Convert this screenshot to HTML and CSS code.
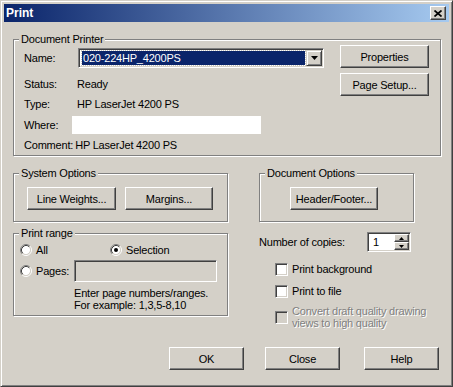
FILE: index.html
```html
<!DOCTYPE html>
<html>
<head>
<meta charset="UTF-8">
<title>Print</title>
<link rel="stylesheet" href="styles.css">
</head>
<body>
<div class="window">
    <div class="titlebar">
        <span class="title">Print</span>
        <span class="close-btn">
            <svg width="8" height="7" viewBox="0 0 8 7"><path d="M0.5 0.5 L7.5 6.5 M7.5 0.5 L0.5 6.5" stroke="#000" stroke-width="1.7" fill="none"/></svg>
        </span>
    </div>

    <div class="dialog">
        <fieldset class="group printer-group">
            <legend>Document Printer</legend>
            <div class="printer-body">
                <div class="printer-info">
                    <div class="row row-name">
                        <span class="lbl">Name:</span>
                        <div class="combo">
                            <div class="combo-value">020-224HP_4200PS</div>
                            <div class="drop">
                                <svg width="7" height="4" viewBox="0 0 7 4"><polygon points="0,0 7,0 3.5,4" fill="#000"/></svg>
                            </div>
                        </div>
                    </div>
                    <div class="row row-status">
                        <span class="lbl">Status:</span>
                        <span class="val">Ready</span>
                    </div>
                    <div class="row">
                        <span class="lbl">Type:</span>
                        <span class="val">HP LaserJet 4200 PS</span>
                    </div>
                    <div class="row row-where">
                        <span class="lbl">Where:</span>
                        <div class="where-field"></div>
                    </div>
                    <div class="row row-comment">
                        <span class="lbl">Comment:</span>
                        <span class="val">HP LaserJet 4200 PS</span>
                    </div>
                </div>
                <div class="printer-buttons">
                    <button class="btn btn-wide">Properties</button>
                    <button class="btn btn-wide">Page Setup...</button>
                </div>
            </div>
        </fieldset>

        <div class="options-row">
            <fieldset class="group system-group">
                <legend>System Options</legend>
                <div class="system-body">
                    <button class="btn btn-wide">Line Weights...</button>
                    <button class="btn btn-mid">Margins...</button>
                </div>
            </fieldset>
            <fieldset class="group docopt-group">
                <legend>Document Options</legend>
                <div class="docopt-body">
                    <button class="btn btn-mid">Header/Footer...</button>
                </div>
            </fieldset>
        </div>

        <div class="lower">
            <fieldset class="group range-group">
                <legend>Print range</legend>
                <div class="range-body">
                    <div class="radio-row">
                        <span class="radio radio-all">
                            <svg class="radio-mark" width="12" height="12" viewBox="0 0 12 12">
                                <circle cx="6" cy="6" r="4.2" fill="#fff"/>
                                <path d="M2.11 9.89 A5.5 5.5 0 0 1 9.89 2.11" stroke="#808080" fill="none"/>
                                <path d="M9.89 2.11 A5.5 5.5 0 0 1 2.11 9.89" stroke="#fff" fill="none"/>
                                <path d="M2.82 9.18 A4.5 4.5 0 0 1 9.18 2.82" stroke="#404040" fill="none"/>
                                <path d="M9.18 2.82 A4.5 4.5 0 0 1 2.82 9.18" stroke="#d4d0c8" fill="none"/>
                            </svg>
                            All
                        </span>
                        <span class="radio">
                            <svg class="radio-mark" width="12" height="12" viewBox="0 0 12 12">
                                <circle cx="6" cy="6" r="4.2" fill="#fff"/>
                                <path d="M2.11 9.89 A5.5 5.5 0 0 1 9.89 2.11" stroke="#808080" fill="none"/>
                                <path d="M9.89 2.11 A5.5 5.5 0 0 1 2.11 9.89" stroke="#fff" fill="none"/>
                                <path d="M2.82 9.18 A4.5 4.5 0 0 1 9.18 2.82" stroke="#404040" fill="none"/>
                                <path d="M9.18 2.82 A4.5 4.5 0 0 1 2.82 9.18" stroke="#d4d0c8" fill="none"/>
                                <circle cx="6" cy="6" r="2" fill="#000"/>
                            </svg>
                            Selection
                        </span>
                    </div>
                    <div class="radio-row pages-row">
                        <span class="radio radio-pages">
                            <svg class="radio-mark" width="12" height="12" viewBox="0 0 12 12">
                                <circle cx="6" cy="6" r="4.2" fill="#fff"/>
                                <path d="M2.11 9.89 A5.5 5.5 0 0 1 9.89 2.11" stroke="#808080" fill="none"/>
                                <path d="M9.89 2.11 A5.5 5.5 0 0 1 2.11 9.89" stroke="#fff" fill="none"/>
                                <path d="M2.82 9.18 A4.5 4.5 0 0 1 9.18 2.82" stroke="#404040" fill="none"/>
                                <path d="M9.18 2.82 A4.5 4.5 0 0 1 2.82 9.18" stroke="#d4d0c8" fill="none"/>
                            </svg>
                            Pages:
                        </span>
                        <div class="pages-field"></div>
                    </div>
                    <div class="range-hint">
                        Enter page numbers/ranges.<br>
                        For example: 1,3,5-8,10
                    </div>
                </div>
            </fieldset>

            <div class="copies-panel">
                <div class="copies-row">
                    <span class="copies-label">Number of copies:</span>
                    <div class="spinner">
                        <span class="spin-value">1</span>
                        <div class="spin-buttons">
                            <span class="spin-btn">
                                <svg width="5" height="3" viewBox="0 0 5 3"><polygon points="2.5,0 5,3 0,3" fill="#000"/></svg>
                            </span>
                            <span class="spin-btn">
                                <svg width="5" height="3" viewBox="0 0 5 3"><polygon points="0,0 5,0 2.5,3" fill="#000"/></svg>
                            </span>
                        </div>
                    </div>
                </div>
                <div class="check-row check-first">
                    <span class="checkbox"></span>
                    <span>Print background</span>
                </div>
                <div class="check-row check-second">
                    <span class="checkbox"></span>
                    <span>Print to file</span>
                </div>
                <div class="check-row check-disabled">
                    <span class="checkbox"></span>
                    <span class="disabled-text">Convert draft quality drawing<br>views to high quality</span>
                </div>
            </div>
        </div>

        <div class="actions">
            <button class="btn btn-action btn-ok">OK</button>
            <button class="btn btn-action btn-close">Close</button>
            <button class="btn btn-action">Help</button>
        </div>
    </div>
</div>
</body>
</html>
```

FILE: styles.css
```css
body
{
    margin: 0;
    font-family: "Liberation Sans", Arial, sans-serif;
    font-size: 11px;
    letter-spacing: -0.2px;
    color: #000;
    background: #d4d0c8;
}

.window
{
    width: 453px;
    height: 387px;
    box-sizing: border-box;
    background: #d4d0c8;
    border: 1px solid;
    border-color: #d4d0c8 #404040 #404040 #d4d0c8;
    box-shadow: inset 1px 1px 0 #fff, inset -1px -1px 0 #808080;
    padding: 3px;
}

/* title bar */
.titlebar
{
    display: flex;
    align-items: center;
    height: 18px;
    padding-left: 2px;
    background: linear-gradient(to right, #0a246a, #a6caf0);
    color: #fff;
}

.title
{
    font-weight: bold;
    font-size: 12px;
    letter-spacing: 0;
}

.close-btn
{
    margin-left: auto;
    margin-right: 3px;
    width: 16px;
    height: 14px;
    box-sizing: border-box;
    display: flex;
    align-items: center;
    justify-content: center;
    background: #d4d0c8;
    border: 1px solid;
    border-color: #fff #404040 #404040 #fff;
    box-shadow: inset -1px -1px 0 #808080;
}

.dialog
{
    padding: 11px 8px 0 9px;
}

/* etched group boxes */
.group
{
    box-sizing: border-box;
    margin: 0;
    padding: 0;
    min-width: 0;
    border: 1px solid #808080;
    box-shadow: 1px 1px 0 #fff, inset 1px 1px 0 #fff;
}

.group legend
{
    margin-left: 5px;
    padding: 0 2px;
    line-height: 13px;
    background: #d4d0c8;
}

/* buttons */
.btn
{
    box-sizing: border-box;
    height: 23px;
    padding: 0;
    font: inherit;
    letter-spacing: inherit;
    color: #000;
    background: #d4d0c8;
    border: 1px solid;
    border-color: #fff #404040 #404040 #fff;
    box-shadow: inset -1px -1px 0 #808080;
}

.btn-wide { width: 89px; }
.btn-mid { width: 88px; }
.btn-action { width: 75px; }

/* document printer */
.printer-body
{
    display: flex;
    padding: 0 9px 0 10px;
}

.printer-info
{
    width: 300px;
}

.printer-buttons
{
    display: flex;
    flex-direction: column;
    gap: 5px;
    margin-left: 16px;
    margin-top: -1px;
}

.row
{
    display: flex;
    align-items: center;
    height: 20px;
    white-space: nowrap;
}

.row-name { margin-top: 2px; }
.row-status { margin-top: 6px; }
.row-where { height: 21px; }

.lbl
{
    width: 48px;
    flex: none;
}

.val
{
    padding-left: 5px;
}

.row-comment .lbl { width: auto; }
.row-comment .val { padding-left: 2px; }

.combo
{
    display: flex;
    margin-left: 6px;
    width: 246px;
    height: 20px;
    box-sizing: border-box;
    padding: 1px;
    background: #fff;
    border: 1px solid;
    border-color: #808080 #fff #fff #808080;
    box-shadow: inset 1px 1px 0 #404040, inset -1px -1px 0 #d4d0c8;
}

.combo-value
{
    flex: 1;
    margin: 1px 1px 1px 2px;
    padding-left: 1px;
    line-height: 14px;
    background: #0a246a;
    color: #fff;
    outline: 1px dotted #c8c4bc;
}

.drop
{
    width: 16px;
    box-sizing: border-box;
    display: flex;
    align-items: center;
    justify-content: center;
    background: #d4d0c8;
    border: 1px solid;
    border-color: #d4d0c8 #404040 #404040 #d4d0c8;
    box-shadow: inset 1px 1px 0 #fff, inset -1px -1px 0 #808080;
}

.where-field
{
    width: 189px;
    height: 18px;
    background: #fff;
}

/* system / document options */
.options-row
{
    display: flex;
    margin-top: 11px;
}

.system-group { width: 215px; }

.system-body
{
    display: flex;
    gap: 9px;
    padding: 7px 13px 11px 13px;
}

.docopt-group
{
    width: 155px;
    margin-left: 31px;
}

.docopt-body
{
    padding: 7px 0 11px 30px;
}

/* print range */
.lower
{
    display: flex;
    align-items: flex-start;
    margin-top: 5px;
}

.range-group { width: 215px; }

.range-body
{
    padding: 1px 9px 4px 6px;
}

.radio-row
{
    display: flex;
    align-items: center;
    height: 17px;
}

.radio
{
    display: flex;
    align-items: center;
}

.radio-mark
{
    margin-right: 4px;
}

.radio-all { width: 90px; }

.pages-row
{
    height: 22px;
    margin-top: 2px;
}

.radio-pages { width: 54px; }

.pages-field
{
    width: 143px;
    height: 22px;
    box-sizing: border-box;
    border: 1px solid;
    border-color: #808080 #fff #fff #808080;
    box-shadow: inset 1px 1px 0 #404040, inset -1px -1px 0 #d4d0c8;
}

.range-hint
{
    margin: 5px 0 0 54px;
    line-height: 12px;
}

/* copies and check boxes */
.copies-panel
{
    margin-left: 31px;
}

.copies-row
{
    display: flex;
    align-items: center;
    height: 20px;
    margin-top: 5px;
}

.copies-label { width: 108px; }

.spinner
{
    display: flex;
    width: 44px;
    height: 20px;
    box-sizing: border-box;
    padding: 1px;
    background: #fff;
    border: 1px solid;
    border-color: #808080 #fff #fff #808080;
    box-shadow: inset 1px 1px 0 #404040, inset -1px -1px 0 #d4d0c8;
}

.spin-value
{
    flex: 1;
    padding-left: 4px;
    line-height: 16px;
}

.spin-buttons
{
    display: flex;
    flex-direction: column;
    width: 15px;
}

.spin-btn
{
    flex: 1;
    display: flex;
    align-items: center;
    justify-content: center;
    box-sizing: border-box;
    background: #d4d0c8;
    border: 1px solid;
    border-color: #fff #404040 #404040 #fff;
    box-shadow: inset -1px -1px 0 #808080;
}

.check-row
{
    display: flex;
    align-items: flex-start;
    margin-left: 16px;
    line-height: 13px;
    white-space: nowrap;
}

.check-first { margin-top: 11px; }
.check-second { margin-top: 9px; }

.check-disabled
{
    align-items: center;
    margin-top: 7px;
    line-height: 12px;
}

.checkbox
{
    width: 13px;
    height: 13px;
    flex: none;
    box-sizing: border-box;
    margin-right: 4px;
    background: #fff;
    border: 1px solid;
    border-color: #808080 #fff #fff #808080;
    box-shadow: inset 1px 1px 0 #404040, inset -1px -1px 0 #d4d0c8;
}

.check-disabled .checkbox { background: #d4d0c8; }

.disabled-text
{
    color: #808080;
    text-shadow: 1px 1px 0 #fff;
}

/* dialog buttons */
.actions
{
    display: flex;
    justify-content: flex-end;
    margin-top: 18px;
    padding-right: 2px;
}

.btn-ok { margin-right: 21px; }
.btn-close { margin-right: 24px; }
```
